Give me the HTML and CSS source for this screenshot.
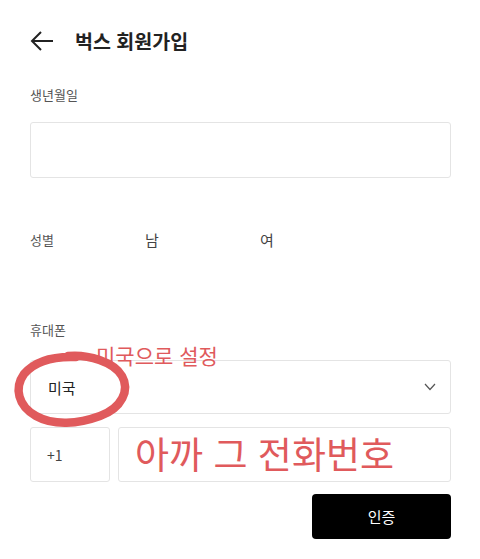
FILE: index.html
```html
<!DOCTYPE html>
<html lang="ko">
<head>
  <meta charset="UTF-8" />
  <meta name="viewport" content="width=device-width, initial-scale=1.0" />
  <title>벅스 회원가입</title>
  <link rel="stylesheet" href="styles.css">
</head>
<body>
  <div class="page">
    <header class="topbar">
      <svg class="back" width="24" height="20" viewBox="0 0 24 20">
        <path d="M23 10H2M11 1L2 10l9 9" fill="none" stroke="#222" stroke-width="2"/>
      </svg>
      <h1 class="title">벅스 회원가입</h1>
    </header>

    <div class="label">생년월일</div>
    <div class="field birth"></div>

    <div class="gender">
      <span class="label">성별</span>
      <span class="option">남</span>
      <span class="option">여</span>
    </div>

    <div class="label phone-label">휴대폰</div>
    <div class="select-wrap">
      <div class="field select">
        <span>미국</span>
        <svg class="chevron" width="12" height="8" viewBox="0 0 12 8">
          <path d="M1 1l5 5.5L11 1" fill="none" stroke="#555" stroke-width="1.2"/>
        </svg>
      </div>
      <span class="note">미국으로 설정</span>
      <svg class="circle" width="130" height="80" viewBox="0 0 130 80">
        <path d="M58 6C78 4 104 12 112 26C120 40 112 58 90 66C68 74 44 76 26 66C8 56 4 38 14 24C24 12 42 6 66 7" fill="none" stroke="#e05a5c" stroke-width="8.5" stroke-linecap="round"/>
      </svg>
    </div>

    <div class="phone-row">
      <div class="field code">+1</div>
      <div class="field number">아까 그 전화번호</div>
    </div>

    <div class="actions">
      <button class="btn">인증</button>
    </div>
  </div>
</body>
</html>
```

FILE: styles.css
```css
* {
  box-sizing: border-box;
  margin: 0;
  padding: 0;
}

body {
  background: #fff;
  font-family: 'Noto Sans CJK KR', 'Noto Sans', sans-serif;
  color: #333;
}

.page {
  padding: 0 29px 0 30px;
}

.topbar {
  height: 85px;
  padding-bottom: 4px;
  display: flex;
  align-items: center;
  gap: 21px;
}

.back {
  flex: none;
}

.title {
  font-size: 19.5px;
  font-weight: bold;
  color: #222;
}

.label {
  font-size: 13px;
  line-height: 20px;
  color: #555;
}

.field {
  border: 1px solid #e4e4e4;
  border-radius: 3px;
  background: #fff;
}

.birth {
  margin-top: 17px;
  height: 56px;
}

.gender {
  margin-top: 52px;
  display: grid;
  grid-template-columns: 115px 115px auto;
  line-height: 20px;
}

.gender .option {
  font-size: 15px;
  color: #444;
}

.phone-label {
  margin-top: 70px;
}

.select-wrap {
  position: relative;
  margin-top: 20px;
}

.select {
  height: 54px;
  display: flex;
  align-items: center;
  justify-content: space-between;
  padding: 0 14px 0 17px;
  font-size: 15px;
  color: #222;
}

.note {
  position: absolute;
  left: 66px;
  top: -19px;
  font-size: 21px;
  line-height: 28px;
  color: #e05a5c;
}

.circle {
  position: absolute;
  left: -20px;
  top: -10px;
}

.phone-row {
  margin-top: 13px;
  display: flex;
  gap: 8px;
}

.code {
  width: 80px;
  height: 55px;
  display: flex;
  align-items: center;
  padding-left: 16px;
  font-size: 14px;
  color: #444;
}

.number {
  flex: 1;
  height: 55px;
  display: flex;
  align-items: center;
  padding: 0 0 4px 16px;
  font-size: 37px;
  color: #e05a5c;
}

.actions {
  margin-top: 12px;
  display: flex;
  justify-content: flex-end;
}

.btn {
  width: 139px;
  height: 45px;
  border: none;
  border-radius: 4px;
  background: #000;
  color: #fff;
  font-family: inherit;
  font-size: 15px;
}
```
